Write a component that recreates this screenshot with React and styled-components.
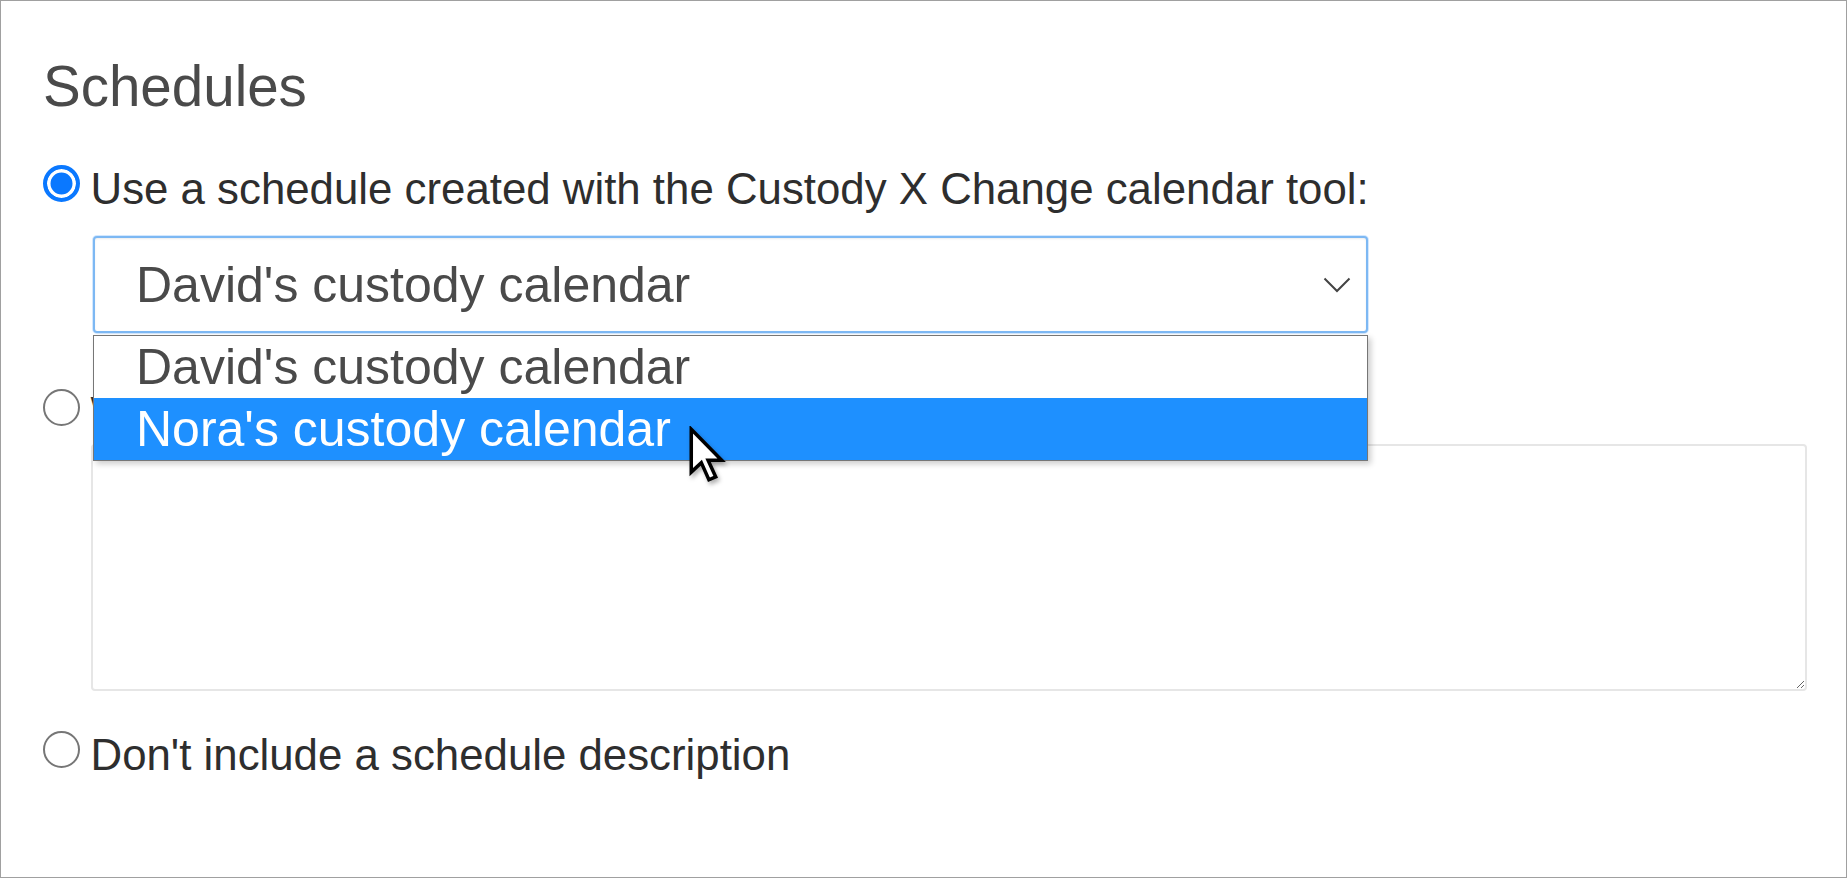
import React from "react";
import styled, { createGlobalStyle } from "styled-components";

const Global = createGlobalStyle`
  html, body { margin: 0; padding: 0; background: #fff; }
  body { font-family: "Liberation Sans", Arial, sans-serif; }
  * { box-sizing: border-box; }
`;

const Frame = styled.div`
  position: relative;
  width: 1847px;
  height: 878px;
  border: 1px solid #a0a0a0;
  padding: 53px 39px 0 42px;
  background: #fff;
  font-family: "Liberation Sans", Arial, sans-serif;
  overflow: hidden;
`;

const Heading = styled.h2`
  margin: 0 0 43px;
  font-size: 56.5px;
  line-height: 66px;
  font-weight: 400;
  color: #4a4a4a;
`;

const RadioRow = styled.label`
  display: flex;
  align-items: flex-start;
  gap: 10.5px;
  height: 52px;
  font-size: 43.8px;
  line-height: 52px;
  color: #2e2e2e;
`;

const Radio = styled.input.attrs({ type: "radio" })`
  appearance: none;
  -webkit-appearance: none;
  flex: none;
  width: 37px;
  height: 37px;
  margin: 1.5px 0 0;
  border-radius: 50%;
  border: ${(p) => (p.checked ? "4px solid #0a78ff" : "2.5px solid #767676")};
  background: ${(p) => (p.checked ? "#0a78ff" : "#fff")};
  box-shadow: ${(p) => (p.checked ? "inset 0 0 0 3.5px #fff" : "none")};
`;

const SelectWrap = styled.div`
  position: relative;
  width: 1275px;
  margin: 21px 0 54px 50px;
`;

const SelectBox = styled.div`
  display: flex;
  align-items: center;
  justify-content: space-between;
  height: 97px;
  padding: 0 15px 0 41px;
  border: 2px solid #7db8f3;
  border-radius: 4px;
  box-shadow: 0 0 0 1px rgba(128, 189, 255, 0.35), inset 0 1px 2px rgba(0, 0, 0, 0.08);
  font-size: 50px;
  color: #4a4a4a;
  background: #fff;
`;

const Chevron = styled.svg`
  flex: none;
  width: 28px;
  height: 16px;
`;

const OptionList = styled.ul`
  position: absolute;
  z-index: 2;
  top: calc(100% + 2px);
  left: 0;
  right: 0;
  margin: 0;
  padding: 0;
  list-style: none;
  border: 1px solid #767676;
  background: #fff;
  box-shadow: 3px 3px 6px rgba(0, 0, 0, 0.2);
`;

const Option = styled.li`
  height: 62px;
  padding-left: 42px;
  font-size: 50px;
  line-height: 62px;
  color: ${(p) => (p.active ? "#fff" : "#4a4a4a")};
  background: ${(p) => (p.active ? "#1e90ff" : "#fff")};
`;

const TextArea = styled.textarea`
  display: block;
  width: calc(100% - 48px);
  height: 247px;
  margin: 5px 0 38px 48px;
  border: 2.5px solid #e6e6e6;
  border-radius: 4px;
  background: #fff;
  resize: both;
  outline: none;
  font-family: "Liberation Sans", Arial, sans-serif;
`;

const Cursor = styled.svg`
  position: absolute;
  z-index: 5;
  left: 687px;
  top: 425px;
  width: 38px;
  height: 57px;
  filter: drop-shadow(2px 3px 2px rgba(0, 0, 0, 0.3));
`;

export default function App() {
  return (
    <>
      <Global />
      <Frame>
        <Heading>Schedules</Heading>
        <RadioRow>
          <Radio name="sched" checked readOnly />
          Use a schedule created with the Custody X Change calendar tool:
        </RadioRow>
        <SelectWrap>
          <SelectBox role="combobox" aria-expanded="true">
            <span>David's custody calendar</span>
            <Chevron viewBox="0 0 28 16">
              <path d="M1.5 1.5 L14 14 L26.5 1.5" fill="none" stroke="#444" strokeWidth="2" />
            </Chevron>
          </SelectBox>
          <OptionList role="listbox">
            <Option>David's custody calendar</Option>
            <Option active>Nora's custody calendar</Option>
          </OptionList>
        </SelectWrap>
        <RadioRow>
          <Radio name="sched" readOnly />
          Write your own schedule description:
        </RadioRow>
        <TextArea />
        <RadioRow>
          <Radio name="sched" readOnly />
          Don't include a schedule description
        </RadioRow>
        <Cursor viewBox="0 0 14 21">
          <path
            d="M1.2 1.2 L1.2 17 L4.9 13.5 L7.7 19.8 L10.2 18.7 L7.4 12.6 L12.4 12.6 Z"
            fill="#fff"
            stroke="#000"
            strokeWidth="1.3"
            strokeLinejoin="miter"
          />
        </Cursor>
      </Frame>
    </>
  );
}
